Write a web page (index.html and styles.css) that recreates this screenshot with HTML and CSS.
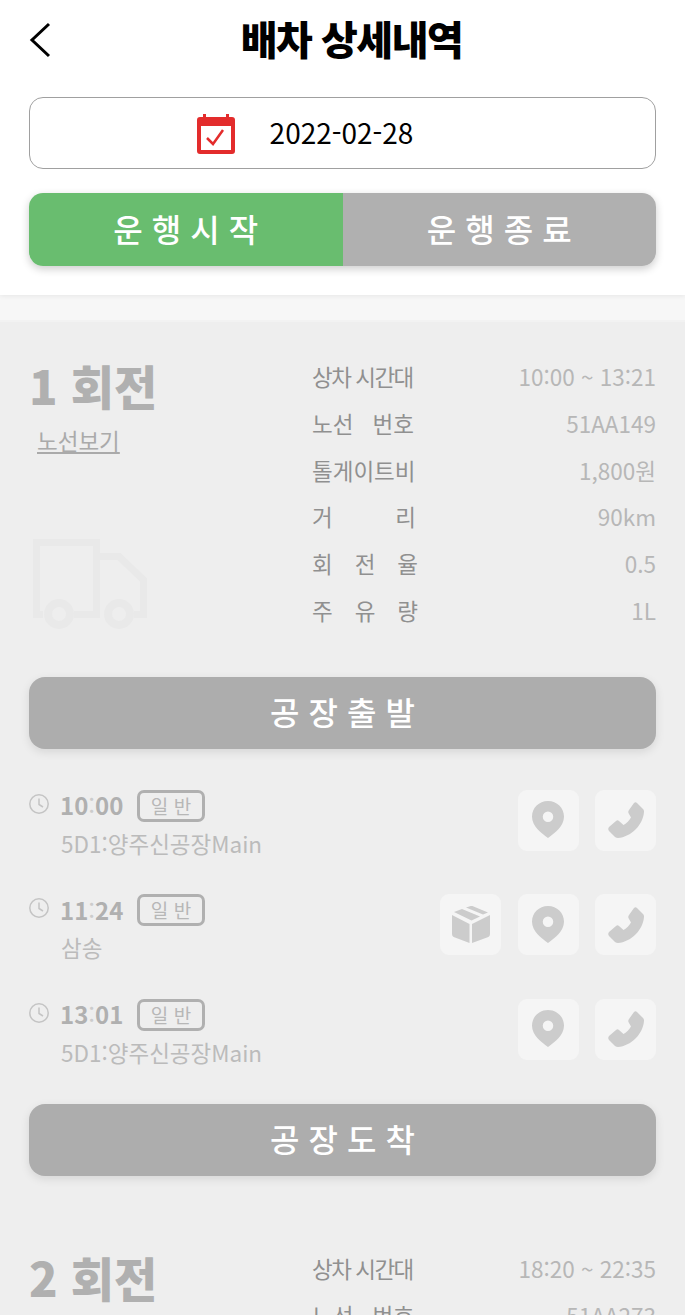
FILE: index.html
```html
<!DOCTYPE html>
<html lang="ko">
<head>
<meta charset="UTF-8" />
<meta name="viewport" content="width=device-width, initial-scale=1.0"/>
<title>배차 상세내역</title>
<link rel="stylesheet" href="styles.css">
</head>
<body>
<svg class="defs" width="0" height="0">
  <symbol id="pin" viewBox="0 0 32 38"><path fill-rule="evenodd" d="M16 0C7 0 0 7 0 15.500C0 25 9 32 16 37C23 32 32 25 32 15.500C32 7 25 0 16 0ZM16 10.500A5.200 5.200 0 1 1 16 21A5.200 5.200 0 0 1 16 10.500Z"/></symbol>
  <symbol id="phone" viewBox="0 0 36 36"><path d="M21 8L26 1C27 0 28 0 29 1L35 7C36 8 36 9 36 10C35 23 23 35 10 36C9 36 8 35.500 7 35L1 29C0 28 0 26 1 25L8 19C9 18 10 18 11 19L15.500 23C19 21 21 19 23 15.500L21 12C20 11 20 9 21 8Z"/></symbol>
  <symbol id="box" viewBox="0 0 38 37"><path d="M0 9L17.500 18V37L3 31.500C1 31 0 30 0 28ZM20 18L38 9V28C38 30 37 31 35 31.500L20 37ZM2 6L10 3L28 10.500L19.500 14.500ZM14 1.500L18 .3C19 0 20 0 21 .3L36 6.500L31 8.500Z"/></symbol>
  <symbol id="clock" viewBox="0 0 20 20"><circle cx="10" cy="10" r="9.200" fill="none" stroke="currentColor" stroke-width="1.500"/><path d="M10 4.500V10.500L14 13" fill="none" stroke="currentColor" stroke-width="1.500"/></symbol>
</svg>

<div class="page">
  <header class="top">
    <div class="title-bar">
      <svg class="back" width="22" height="36" viewBox="0 0 22 36"><path d="M20 2L3 18L20 34" fill="none" stroke="#000" stroke-width="3"/></svg>
      <h1>배차 상세내역</h1>
    </div>
    <div class="date-box">
      <svg class="cal" width="40" height="40" viewBox="0 0 40 40">
        <path d="M7 0h3v3h20V0h3v3h3c2 0 3 1 3 3v31c0 2-1 3-3 3H4c-2 0-3-1-3-3V6c0-2 1-3 3-3h3z" fill="#e32c2c"/>
        <rect x="5" y="12" width="30" height="24" fill="#fff"/>
        <path d="M11 24l6 6L27 16" fill="none" stroke="#e32c2c" stroke-width="2.500"/>
      </svg>
      <span>2022-02-28</span>
    </div>
    <div class="toggle">
      <div class="toggle-item on">운행시작</div>
      <div class="toggle-item">운행종료</div>
    </div>
  </header>
  <div class="band"></div>

  <section class="round">
    <div class="round-head">
      <div class="round-left">
        <h2>1 회전</h2>
        <a class="route-link">노선보기</a>
        <svg class="truck" width="114" height="92" viewBox="0 0 114 92">
          <path d="M3.500 79V3.500H63.500V75.500H41M63.500 17.500H86L110.500 41V79M0 75.500H10M101 75.500H114" fill="none" stroke="#e9e9e9" stroke-width="7"/>
          <circle cx="26" cy="75" r="11" fill="none" stroke="#e9e9e9" stroke-width="8"/>
          <circle cx="86" cy="75" r="11" fill="none" stroke="#e9e9e9" stroke-width="8"/>
        </svg>
      </div>
      <dl class="info">
        <div class="info-row"><dt class="tight">상차 시간대</dt><dd>10:00 ~ 13:21</dd></div>
        <div class="info-row"><dt class="narrow">노선 번호</dt><dd>51AA149</dd></div>
        <div class="info-row"><dt>톨게이트비</dt><dd>1,800원</dd></div>
        <div class="info-row"><dt>거 리</dt><dd>90km</dd></div>
        <div class="info-row"><dt class="wide">회 전 율</dt><dd>0.5</dd></div>
        <div class="info-row"><dt class="wide">주 유 량</dt><dd>1L</dd></div>
      </dl>
    </div>

    <button class="big-btn">공장출발</button>

    <div class="stops">
      <div class="stop">
        <div class="stop-text">
          <div class="stop-time"><svg class="clock" width="20" height="20"><use href="#clock"/></svg><b>10<i>:</i>00</b><span class="badge">일 반</span></div>
          <div class="stop-name">5D1:양주신공장Main</div>
        </div>
        <div class="stop-icons">
          <span class="icon-btn"><svg width="32" height="38"><use href="#pin"/></svg></span>
          <span class="icon-btn"><svg width="36" height="36"><use href="#phone"/></svg></span>
        </div>
      </div>
      <div class="stop">
        <div class="stop-text">
          <div class="stop-time"><svg class="clock" width="20" height="20"><use href="#clock"/></svg><b>11<i>:</i>24</b><span class="badge">일 반</span></div>
          <div class="stop-name">삼송</div>
        </div>
        <div class="stop-icons">
          <span class="icon-btn"><svg width="38" height="37"><use href="#box"/></svg></span>
          <span class="icon-btn"><svg width="32" height="38"><use href="#pin"/></svg></span>
          <span class="icon-btn"><svg width="36" height="36"><use href="#phone"/></svg></span>
        </div>
      </div>
      <div class="stop">
        <div class="stop-text">
          <div class="stop-time"><svg class="clock" width="20" height="20"><use href="#clock"/></svg><b>13<i>:</i>01</b><span class="badge">일 반</span></div>
          <div class="stop-name">5D1:양주신공장Main</div>
        </div>
        <div class="stop-icons">
          <span class="icon-btn"><svg width="32" height="38"><use href="#pin"/></svg></span>
          <span class="icon-btn"><svg width="36" height="36"><use href="#phone"/></svg></span>
        </div>
      </div>
    </div>

    <button class="big-btn">공장도착</button>
  </section>

  <section class="round second">
    <div class="round-head">
      <div class="round-left">
        <h2>2 회전</h2>
      </div>
      <dl class="info">
        <div class="info-row"><dt class="tight">상차 시간대</dt><dd>18:20 ~ 22:35</dd></div>
        <div class="info-row"><dt class="narrow">노선 번호</dt><dd>51AA273</dd></div>
      </dl>
    </div>
  </section>
</div>
</body>
</html>
```

FILE: styles.css
```css
* {
  box-sizing: border-box;
}
body {
  margin: 0;
  font-family: "Noto Sans CJK KR", "Noto Sans", sans-serif;
  background: #eeeeee;
}
.defs {
  position: absolute;
}
.page {
  height: 100vh;
  overflow: hidden;
}
.top {
  position: relative;
  background: #fff;
  height: 295px;
  padding: 0 29px;
  box-shadow: 0 1px 5px rgba(0,0,0,0.07);
}
.title-bar {
  position: relative;
  height: 97px;
  padding: 0 0 22px 18px;
  display: flex;
  align-items: center;
  justify-content: center;
}
.back {
  position: absolute;
  left: 0;
  top: 22px;
}
.title-bar h1 {
  margin: 0;
  font-size: 40px;
  font-weight: 900;
  letter-spacing: -1.500px;
  color: #000;
}
.date-box {
  height: 72px;
  border: 1px solid #a0a0a0;
  border-radius: 14px;
  display: flex;
  align-items: center;
  justify-content: center;
  gap: 34px;
  font-size: 28px;
  color: #000;
  padding-right: 76px;
}
.cal {
  margin-top: 2px;
}
.date-box span {
  margin-top: -3px;
}
.toggle {
  display: flex;
  margin-top: 24px;
  height: 73px;
  border-radius: 14px;
  overflow: hidden;
  box-shadow: 0 3px 8px rgba(0,0,0,0.2);
}
.toggle-item {
  flex: 1;
  background: #b0b0b0;
  color: #fff;
  font-size: 32px;
  font-weight: 500;
  letter-spacing: 9px;
  text-indent: 9px;
  line-height: 70px;
  text-align: center;
}
.toggle-item.on {
  background: #69bd6f;
}
.band {
  height: 27px;
  background: #f7f7f7;
  border-bottom: 2px solid #f2f2f2;
}
.round {
  padding: 0 29px;
}
.round-head {
  display: flex;
  justify-content: space-between;
  padding-top: 31px;
}
.round-left {
  width: 283px;
}
.round-left h2 {
  margin: 0;
  font-size: 47px;
  font-weight: 900;
  line-height: 64px;
  color: #b0b0b0;
}
.route-link {
  display: block;
  margin: 8px 0 0 8px;
  font-size: 22.500px;
  line-height: 30px;
  color: #aaa;
  text-decoration: underline;
}
.truck {
  display: block;
  margin: 84px 0 0 4px;
}
.info {
  flex: 1;
  margin: 0;
}
.info-row {
  display: flex;
  justify-content: space-between;
  height: 46.800px;
  line-height: 46.800px;
  font-size: 22.500px;
  font-feature-settings: "calt" 0;
}
.info-row dt {
  width: 104px;
  color: #909090;
  text-align: justify;
  text-align-last: justify;
  white-space: nowrap;
}
.info-row dt.tight {
  letter-spacing: -1.500px;
  text-align-last: left;
}
.info-row dt.narrow {
  width: 102px;
}
.info-row dt.wide {
  width: 106px;
}
.info-row dd {
  margin: 0;
  color: #b7b7b7;
}
.big-btn {
  display: block;
  width: 100%;
  height: 72px;
  padding: 0 0 4px;
  border: none;
  border-radius: 16px;
  background: #adadad;
  color: #fff;
  font-family: inherit;
  font-size: 32px;
  font-weight: 500;
  letter-spacing: 9px;
  text-indent: 9px;
  box-shadow: 0 3px 10px rgba(0,0,0,0.1);
}
.round-head + .big-btn {
  margin-top: 43px;
}
.stops {
  padding: 41px 0 1px;
}
.stop {
  display: flex;
  justify-content: space-between;
  height: 104.500px;
}
.stop-time {
  display: flex;
  align-items: center;
  height: 32px;
  color: #b0b0b0;
}
.clock {
  color: #c4c4c4;
  margin-right: 11px;
  margin-top: -4px;
}
.stop-time b {
  font-size: 24px;
  font-weight: 700;
  width: 77px;
  margin-top: -2px;
}
.stop-time b i {
  font-style: normal;
  font-weight: 400;
  color: #ccc;
}
.badge {
  display: block;
  width: 68px;
  height: 32px;
  border: 3px solid #b0b0b0;
  border-radius: 7px;
  font-size: 19px;
  line-height: 25px;
  text-align: center;
  color: #b7b7b7;
}
.stop-name {
  margin: 4px 0 0 32px;
  font-size: 22.500px;
  line-height: 34px;
  color: #bbb;
  font-feature-settings: "calt" 0;
}
.stop-icons {
  display: flex;
  gap: 16.500px;
}
.icon-btn {
  width: 61px;
  height: 61px;
  border-radius: 9px;
  background: #f5f5f5;
  display: flex;
  align-items: center;
  justify-content: center;
}
.icon-btn svg {
  fill: #cccccc;
}
.second .round-head {
  padding-top: 69px;
}
```
